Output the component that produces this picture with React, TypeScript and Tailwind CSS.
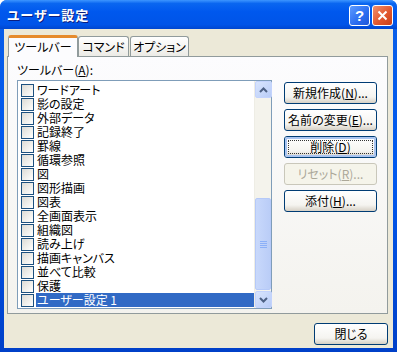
const items = [
  "ワードアート",
  "影の設定",
  "外部データ",
  "記録終了",
  "罫線",
  "循環参照",
  "図",
  "図形描画",
  "図表",
  "全画面表示",
  "組織図",
  "読み上げ",
  "描画キャンバス",
  "並べて比較",
  "保護",
  "ユーザー設定 1"
];

const font = "font-['MS_UI_Gothic','Noto_Sans_CJK_JP',sans-serif] [font-feature-settings:'palt']";

function Btn({
  children,
  disabled,
  focused,
  className = ""
}: {
  children: React.ReactNode;
  disabled?: boolean;
  focused?: boolean;
  className?: string;
}) {
  return (
    <div
      className={`h-[22px] rounded-[3px] border flex items-center justify-center text-[12px] leading-none whitespace-nowrap ${
        disabled
          ? "border-[#C9C7BA] bg-[#F5F4EA] text-[#ACA899]"
          : "border-[#003C74] bg-[linear-gradient(to_bottom,#FFFFFF,#F5F4F0_70%,#D6D0C5)] text-black"
      } ${className}`}
    >
      {focused ? (
        <div className="w-full h-full rounded-[2px] border-2 border-[#A9C4F0] p-[1px]">
          <div className="w-full h-full border border-dotted border-[#333] flex items-center justify-center">
            {children}
          </div>
        </div>
      ) : (
        children
      )}
    </div>
  );
}

function CheckBox() {
  return (
    <div className="w-[13px] h-[13px] shrink-0 border border-[#1C5180] bg-[linear-gradient(135deg,#DCDBD5,#F5F5F2_70%,#FFFFFF)]" />
  );
}

function Arrow({ up }: { up?: boolean }) {
  return (
    <div className="w-[17px] h-[17px] rounded-[2px] border border-[#C3D3FD] bg-[linear-gradient(135deg,#D9E5FD,#B8CCF7)] flex items-center justify-center">
      <svg viewBox="0 0 9 6" className="w-[9px] h-[6px]">
        <path
          d={up ? "M1 5L4.5 1.5L8 5" : "M1 1L4.5 4.5L8 1"}
          stroke="#4D6185"
          strokeWidth="2"
          fill="none"
        />
      </svg>
    </div>
  );
}

export default function App() {
  return (
    <div
      className={`w-[397px] h-[352px] flex flex-col rounded-t-[7px] bg-[linear-gradient(to_bottom,#0A5FE8,#0058EE_50%,#0040C8)] ${font}`}
    >
      {/* title bar */}
      <div className="h-[29px] shrink-0 rounded-t-[7px] flex items-center px-[7px] bg-[linear-gradient(to_bottom,#3D95FF_0%,#0A66F0_12%,#0058EE_40%,#0054E8_85%,#0046D0_100%)]">
        <span className="text-white font-bold text-[13px] tracking-[1px] leading-none [text-shadow:1px_1px_#0A1E80]">
          ユーザー設定
        </span>
        <div className="ml-auto flex gap-[2px] mt-[1px] mr-[-3px]">
          <div className="w-[21px] h-[21px] rounded-[3px] border border-white bg-[linear-gradient(135deg,#5C9BFF,#2A6CF0_60%,#1F56D8)] flex items-center justify-center text-white font-bold text-[15px] leading-none font-['Liberation_Sans',sans-serif]">
            ?
          </div>
          <div className="w-[21px] h-[21px] rounded-[3px] border border-white bg-[linear-gradient(135deg,#F0906E,#E2582F_55%,#C8401A)] flex items-center justify-center">
            <svg viewBox="0 0 11 11" className="w-[11px] h-[11px]">
              <path d="M1.5 1.5L9.5 9.5M9.5 1.5L1.5 9.5" stroke="white" strokeWidth="2" />
            </svg>
          </div>
        </div>
      </div>

      {/* client */}
      <div className="flex-1 mx-[4px] mb-[4px] bg-[#ECE9D8] flex flex-col text-[12px] text-black">
        {/* tabs */}
        <div className="flex items-end pl-[4px] pt-[5px] h-[27px] relative z-10 whitespace-nowrap leading-none">
          <div className="h-[22px] w-[70px] border border-b-0 border-[#919B9C] border-t-[#E68B2C] border-t-[3px] rounded-t-[3px] bg-[#FCFCFE] flex items-center justify-center pb-[1px] mb-[-1px]">
            ツールバー
          </div>
          <div className="h-[20px] w-[51px] border border-b-0 border-[#919B9C] rounded-t-[3px] bg-[linear-gradient(to_bottom,#FFFFFF,#ECEBE6)] flex items-center justify-center">
            コマンド
          </div>
          <div className="h-[20px] w-[59px] ml-[1px] border border-b-0 border-[#919B9C] rounded-t-[3px] bg-[linear-gradient(to_bottom,#FFFFFF,#ECEBE6)] flex items-center justify-center">
            オプション
          </div>
        </div>

        {/* panel */}
        <div className="ml-[3px] mr-[5px] h-[258px] border border-[#919B9C] bg-[linear-gradient(to_bottom,#FCFCFE,#F4F3EE)] px-[9px] pt-[7px]">
          <div className="leading-none h-[16px]">
            ツールバー(<span className="underline">A</span>):
          </div>
          <div className="flex gap-[12px]">
            {/* list box */}
            <div className="w-[255px] h-[229px] border border-[#7F9DB9] bg-white flex">
              <div className="flex-1 pt-[2px] pl-[3px]">
                {items.map((it, i) => (
                  <div key={it} className="h-[14px] leading-[14px] flex items-center gap-[2px]">
                    <CheckBox />
                    <span
                      className={`h-[14px] leading-[14px] flex-1 pl-[1px] whitespace-nowrap ${
                        i === items.length - 1 ? "bg-[#316AC5] text-white" : ""
                      }`}
                    >
                      {it}
                    </span>
                  </div>
                ))}
              </div>
              <div className="w-[17px] flex flex-col bg-[#F4F3EC] border-l border-[#EEEDE5]">
                <Arrow up />
                <div className="flex-1 flex flex-col">
                  <div className="h-[100px]" />
                  <div className="flex-1 mb-[1px] rounded-[2px] border border-[#B5C9F8] bg-[linear-gradient(to_right,#C8D8FB,#BACDF7)] flex items-center justify-center">
                    <div className="flex flex-col gap-[1px]">
                      <div className="w-[7px] h-[1px] bg-[#8CB0F8]" />
                      <div className="w-[7px] h-[1px] bg-[#8CB0F8]" />
                      <div className="w-[7px] h-[1px] bg-[#8CB0F8]" />
                      <div className="w-[7px] h-[1px] bg-[#8CB0F8]" />
                    </div>
                  </div>
                </div>
                <Arrow />
              </div>
            </div>

            {/* buttons */}
            <div className="w-[93px] pt-[2px] flex flex-col gap-[5px]">
              <Btn>
                新規作成(<span className="underline">N</span>)...
              </Btn>
              <Btn>
                名前の変更(<span className="underline">E</span>)...
              </Btn>
              <Btn focused>
                削除(<span className="underline">D</span>)
              </Btn>
              <Btn disabled>
                リセット(<span className="underline">R</span>)...
              </Btn>
              <Btn>
                添付(<span className="underline">H</span>)...
              </Btn>
            </div>
          </div>
        </div>

        {/* footer */}
        <div className="flex justify-end pr-[5px] pt-[9px]">
          <Btn className="w-[74px]">閉じる</Btn>
        </div>
      </div>
    </div>
  );
}
